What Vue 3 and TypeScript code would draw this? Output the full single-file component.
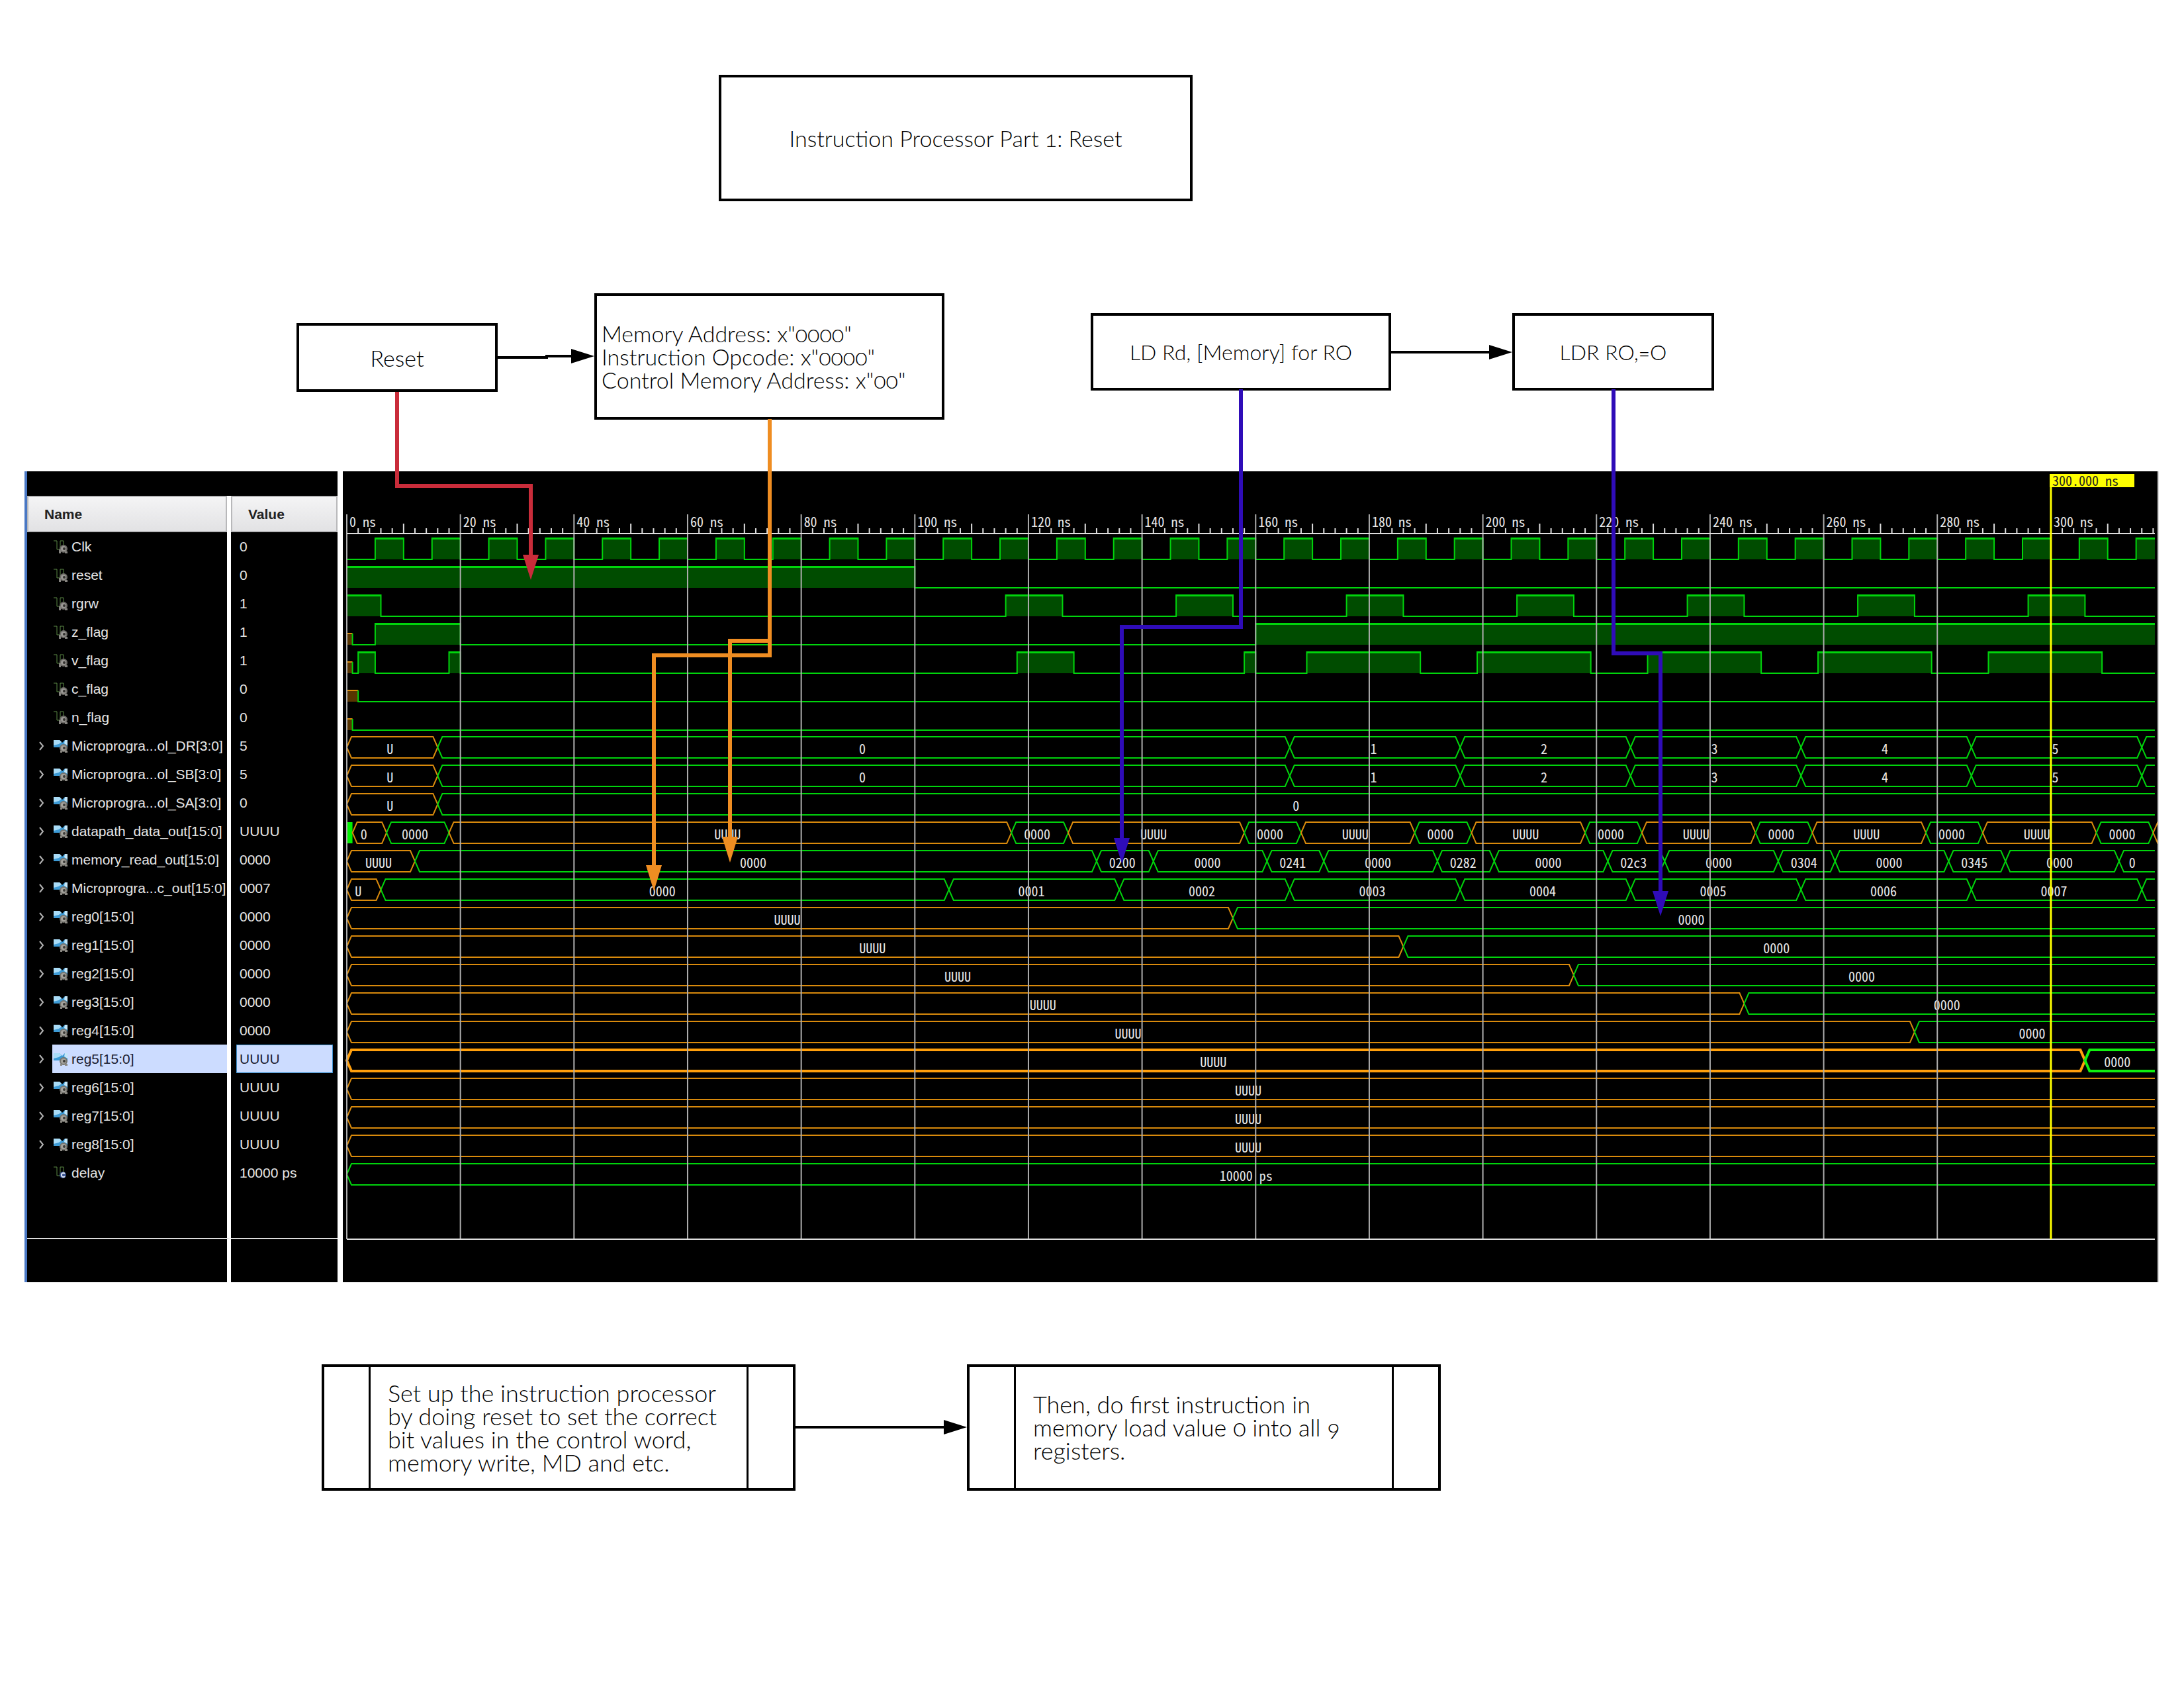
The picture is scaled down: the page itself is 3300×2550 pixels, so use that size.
<script setup lang="ts">
type Level = 'high' | 'low' | 'undef'
interface Pulse { from: number; to: number }
interface Segment { to: number; text: string; undef?: boolean; at?: number }
interface Signal {
  name: string
  value: string
  kind: 'bit' | 'bus' | 'const'
  undefUntil?: number
  pulses?: Pulse[]
  segments?: Segment[]
  dense?: boolean
  selected?: boolean
}

const END = 318.3
const WAVE_W = 2742
const WAVE_H = 1225
const ROW_TOP = 92
const ROW_H = 43
const NS_PX = 8.583

const px = (ns: number): number => 6 + ns * NS_PX
const pct = (x: number, total: number): string => `${(x / total) * 100}%`

const u = (to: number, text = 'UUUU', at?: number): Segment => ({ to, text, undef: true, at })
const v = (to: number, text: string, at?: number): Segment => ({ to, text, at })
const every = (from: number, len: number, step: number): Pulse[] => {
  const out: Pulse[] = []
  for (let t = from; t < END; t += step) out.push({ from: t, to: Math.min(t + len, END) })
  return out
}

const control = (): Segment[] => [
  u(16, 'U', 7.6), v(166, '0'), v(196, '1'), v(226, '2'), v(256, '3'), v(286, '4'), v(316, '5'), v(END, ''),
]
const register = (n: number, loaded: number | null): Signal => ({
  name: `reg${n}[15:0]`,
  value: n < 5 ? '0000' : 'UUUU',
  kind: 'bus',
  selected: n === 5,
  segments: loaded === null ? [u(END)] : [u(loaded), v(END, '0000')],
})

const datapath: Segment[] = [u(7, '0', 3), v(18, '0000', 12), u(117), v(127, '0000'), u(158), v(168, '0000')]
for (let t = 168; t < 308; t += 30) datapath.push(u(t + 20), v(t + 30, '0000'))
datapath.push(u(END, ''))

const signals: Signal[] = [
  { name: 'Clk', value: '0', kind: 'bit', pulses: every(5, 5, 10) },
  { name: 'reset', value: '0', kind: 'bit', pulses: [{ from: 0, to: 100 }] },
  { name: 'rgrw', value: '1', kind: 'bit', pulses: [{ from: 0, to: 6 }, ...every(116, 10, 30)] },
  { name: 'z_flag', value: '1', kind: 'bit', undefUntil: 1, pulses: [{ from: 5, to: 20 }, { from: 160, to: END }] },
  {
    name: 'v_flag', value: '1', kind: 'bit', undefUntil: 1,
    pulses: [{ from: 2, to: 5 }, { from: 18, to: 20 }, { from: 118, to: 128 }, { from: 158, to: 160 }, ...every(169, 20, 30)],
  },
  { name: 'c_flag', value: '0', kind: 'bit', undefUntil: 2, pulses: [] },
  { name: 'n_flag', value: '0', kind: 'bit', undefUntil: 1, pulses: [] },
  { name: 'Microprogra...ol_DR[3:0]', value: '5', kind: 'bus', segments: control() },
  { name: 'Microprogra...ol_SB[3:0]', value: '5', kind: 'bus', segments: control() },
  { name: 'Microprogra...ol_SA[3:0]', value: '0', kind: 'bus', segments: [u(16, 'U', 7.6), v(END, '0', 167.1)] },
  { name: 'datapath_data_out[15:0]', value: 'UUUU', kind: 'bus', dense: true, segments: datapath },
  {
    name: 'memory_read_out[15:0]', value: '0000', kind: 'bus',
    segments: [
      u(12, 'UUUU', 5.6), v(132, '0000'), v(142, '0200'), v(162, '0000'), v(172, '0241'), v(192, '0000'),
      v(202, '0282'), v(222, '0000'), v(232, '02c3'), v(252, '0000'), v(262, '0304'), v(282, '0000'),
      v(292, '0345'), v(312, '0000'), v(END, '0', 314.3),
    ],
  },
  {
    name: 'Microprogra...c_out[15:0]', value: '0007', kind: 'bus',
    segments: [
      u(6, 'U', 2), v(106, '0000'), v(136, '0001'), v(166, '0002'), v(196, '0003'), v(226, '0004'),
      v(256, '0005'), v(286, '0006'), v(316, '0007'), v(END, ''),
    ],
  },
  register(0, 156), register(1, 186), register(2, 216), register(3, 246), register(4, 276), register(5, 306),
  register(6, null), register(7, null), register(8, null),
  { name: 'delay', value: '10000 ps', kind: 'const', segments: [v(END, '10000 ps', 158.3)] },
]

interface Shape { d: string; cls: string }
interface Label { text: string; left: string; top: string }
const fills: Shape[] = []
const lines: Shape[] = []
const labels: Label[] = []

function drawBit(s: Signal, top: number): void {
  const y: Record<Level, number> = { high: top + 9, low: top + 41, undef: top + 24 }
  const start = s.undefUntil ?? 0
  if (start > 0) {
    fills.push({ d: `M${px(0)} ${y.undef}H${px(start)}V${y.low}H${px(0)}Z`, cls: 'fill-u' })
    lines.push({ d: `M${px(0)} ${y.undef}H${px(start)}`, cls: 'line-u' })
  }
  let d = start > 0 ? `M${px(start)} ${y.undef}V${y.low}` : `M${px(0)} ${y.low}`
  for (const p of s.pulses ?? []) {
    fills.push({ d: `M${px(p.from)} ${y.high}H${px(p.to)}V${y.low}H${px(p.from)}Z`, cls: 'fill-v' })
    lines.push({ d: `M${px(p.from)} ${y.high + 1}H${px(p.to)}`, cls: 'line-v' })
    d += p.from === 0 ? `M${px(0)} ${y.high}` : `H${px(p.from)}V${y.high}`
    d += p.to === END ? `H${px(END)}` : `H${px(p.to)}V${y.low}`
  }
  const last = s.pulses?.[s.pulses.length - 1]
  if (!last || last.to !== END) d += `H${px(END)}`
  lines.push({ d, cls: 'line-v' })
}

function drawBus(s: Signal, top: number): void {
  const hi = top + 8
  const lo = top + 40
  const mid = top + 24
  let from = s.dense ? 1 : 0
  if (s.dense) fills.push({ d: `M${px(0)} ${hi}H${px(1)}V${lo}H${px(0)}Z`, cls: 'fill-dense' })
  for (const seg of s.segments ?? []) {
    const a = px(from)
    const b = px(seg.to)
    const cls = (seg.undef ? 'line-u' : 'line-v') + (s.selected ? ' thick' : '')
    if (seg.to === END) {
      const r = Math.max(b, a + 9)
      lines.push({ d: `M${r} ${hi}H${a + 7}L${a} ${mid}L${a + 7} ${lo}H${r}`, cls })
    } else {
      lines.push({ d: `M${a} ${mid}L${a + 7} ${hi}H${b - 7}L${b} ${mid}L${b - 7} ${lo}H${a + 7}Z`, cls })
    }
    if (seg.text) {
      const shift = seg.text.length > 1 ? 4 : 2
      labels.push({
        text: seg.text,
        left: pct(seg.at === undefined ? (a + b) / 2 - shift : px(seg.at), WAVE_W),
        top: `${top + 14}px`,
      })
    }
    from = seg.to
  }
}

signals.forEach((s, i) => {
  const top = ROW_TOP + i * ROW_H
  if (s.kind === 'bit') drawBit(s, top)
  else drawBus(s, top)
})

const majors = Array.from({ length: 16 }, (_, i) => i * 20)
let ticks = ''
for (let t = 2; t < END; t += 2) if (t % 20) ticks += `M${px(t)} 86V93`
for (let t = 10; t < END; t += 20) ticks += `M${px(t)} 79V93`
const grid = majors.filter((t) => t < 300).map((t) => `M${px(t)} 65V1160`).join('')

const BOARD_W = 3300
interface Node { id: string; text: string; x: number; y: number; w: number; h: number; kind: string }
const nodes: Node[] = [
  { id: 'title', text: 'Instruction Processor Part 1: Reset', x: 1086, y: 113, w: 716, h: 191, kind: 'center' },
  { id: 'reset', text: 'Reset', x: 448, y: 488, w: 304, h: 104, kind: 'center' },
  { id: 'memory', text: 'Memory Address: x"0000"\nInstruction Opcode: x"0000"\nControl Memory Address: x"00"', x: 898, y: 443, w: 529, h: 191, kind: 'left' },
  { id: 'ld', text: 'LD Rd, [Memory] for RO', x: 1648, y: 473, w: 454, h: 117, kind: 'center compact' },
  { id: 'ldr', text: 'LDR RO,=O', x: 2285, y: 473, w: 305, h: 117, kind: 'center compact' },
  { id: 'setup', text: 'Set up the instruction processor\nby doing reset to set the correct\nbit values in the control word,\nmemory write, MD and etc.', x: 486, y: 2061, w: 716, h: 191, kind: 'process' },
  { id: 'load', text: 'Then, do first instruction in\nmemory load value 0 into all 9\nregisters.', x: 1461, y: 2061, w: 716, h: 191, kind: 'process' },
]
const place = (n: Node) => ({
  left: pct(n.x, BOARD_W), top: `${n.y}px`, width: pct(n.w, BOARD_W), height: `${n.h}px`,
})

const links = [
  { color: '#000', width: 4, d: 'M752 540H826V538H866', head: 'M863 527L898 538L863 549Z' },
  { color: '#000', width: 4, d: 'M2102 532H2252', head: 'M2250 521L2285 532L2250 543Z' },
  { color: '#000', width: 4, d: 'M1202 2156H1428', head: 'M1426 2145L1461 2156L1426 2167Z' },
  { color: '#c92c3a', width: 6, d: 'M600 592V734H802V840', head: 'M790 838H814L802 876Z' },
  { color: '#ef8d22', width: 6, d: 'M1163 633V968H1103V1266', head: 'M1091 1264H1115L1103 1303Z' },
  { color: '#ef8d22', width: 6, d: 'M1163 633V990H988V1309', head: 'M976 1307H1000L988 1346Z' },
  { color: '#2f0cb8', width: 6, d: 'M1875 588V947H1695V1268', head: 'M1683 1266H1707L1695 1304Z' },
  { color: '#2f0cb8', width: 6, d: 'M2438 588V987H2509V1348', head: 'M2497 1346H2521L2509 1384Z' },
]
</script>

<template>
  <main class="board">
    <section class="viewer">
      <table class="signals">
        <colgroup><col class="col-name" /><col class="col-value" /></colgroup>
        <thead>
          <tr class="spacer"><td colspan="2"></td></tr>
          <tr>
            <th scope="col" class="head-name"><div>Name</div></th>
            <th scope="col" class="head-value"><div>Value</div></th>
          </tr>
        </thead>
        <tbody>
          <tr v-for="s in signals" :key="s.name" :class="{ selected: s.selected }">
            <td class="name">
              <div class="name-line">
                <span class="toggle">
                  <button v-if="s.kind === 'bus'" type="button" :aria-label="`Expand ${s.name}`">
                    <svg width="8" height="14" viewBox="0 0 8 14"><path d="M1 1L6 7L1 13" fill="none" stroke="#b4b4b4" stroke-width="2" /></svg>
                  </button>
                </span>
                <span class="tag">
                  <svg v-if="s.kind === 'bus'" class="icon" viewBox="0 0 21 21">
                    <path d="M0 2H9L13 6L17 2H21V14H17L13 11L9 13H0Z" fill="#3d9bd6" />
                    <path d="M0 2H9L12 5L8 8L0 10Z" fill="#a9dcf7" />
                    <path d="M17 2H21V10L16 7Z" fill="#c4e6f8" />
                    <circle cx="15" cy="14" r="6" fill="#77756f" />
                    <circle cx="15" cy="14" r="4" fill="#a5a39d" />
                    <circle cx="16" cy="14" r="2" fill="#3c3b38" />
                    <path d="M10 18H13V21H10ZM17 18H21V21H17Z" fill="#8b8983" />
                  </svg>
                  <svg v-else class="icon" viewBox="0 0 21 21">
                    <path d="M0 2H5V15H10V2H15V9" fill="none" stroke="#5d8a46" stroke-width="1" />
                    <template v-if="s.kind === 'bit'">
                      <circle cx="15" cy="14" r="6" fill="#6b6965" />
                      <circle cx="15" cy="14" r="4" fill="#9a9894" />
                      <circle cx="16" cy="14" r="2" fill="#33322f" />
                      <path d="M8 15H11V21H8ZM17 18H21V21H17Z" fill="#84827e" />
                    </template>
                    <template v-else>
                      <circle cx="14" cy="14" r="5" fill="#34508f" />
                      <path d="M17 12A3 3 0 1 0 17 16" fill="none" stroke="#dfe6f5" stroke-width="2" />
                    </template>
                  </svg>
                  {{ s.name }}
                </span>
              </div>
            </td>
            <td class="value"><div class="value-box">{{ s.value }}</div></td>
          </tr>
          <tr class="rest"><td class="name"></td><td></td></tr>
          <tr class="foot"><td class="name"></td><td></td></tr>
        </tbody>
      </table>

      <div class="wave">
        <svg class="layer" :viewBox="`0 0 ${WAVE_W} ${WAVE_H}`" preserveAspectRatio="none">
          <path v-for="(f, i) in fills" :key="'f' + i" :d="f.d" :class="f.cls" />
          <path v-for="(l, i) in lines" :key="'l' + i" :d="l.d" class="line" :class="l.cls" />
        </svg>
        <span v-for="(l, i) in labels" :key="i" class="label" :style="{ left: l.left, top: l.top }">{{ l.text }}</span>
        <span v-for="t in majors" :key="t" class="tick" :style="{ left: pct(px(t) + 4, WAVE_W) }">{{ t }} ns</span>
        <svg class="layer" :viewBox="`0 0 ${WAVE_W} ${WAVE_H}`" preserveAspectRatio="none">
          <path :d="grid" class="line grid" />
          <path :d="ticks" class="line ruler" />
          <path :d="`M${px(0)} 94H${px(END)}M${px(0)} 1160H${px(END)}`" class="line ruler" />
          <path :d="`M${px(300)} 4V1160`" class="line cursor" />
        </svg>
        <span class="cursor-label" :style="{ left: pct(px(300) - 2, WAVE_W) }">300.000 ns</span>
      </div>
    </section>

    <div v-for="n in nodes" :key="n.id" class="node" :class="n.kind" :style="place(n)">
      <component :is="n.id === 'title' ? 'h1' : 'p'" class="node-text">{{ n.text }}</component>
    </div>

    <svg class="links" viewBox="0 0 3300 2550" preserveAspectRatio="none">
      <g v-for="(l, i) in links" :key="i">
        <path :d="l.d" fill="none" :stroke="l.color" :stroke-width="l.width" />
        <path :d="l.head" :fill="l.color" />
      </g>
    </svg>
  </main>
</template>

<style>
body {
  margin: 0;
  background: #fff;
}
</style>

<style scoped>
.board {
  position: relative;
  box-sizing: border-box;
  min-height: 2550px;
  padding: 712px 38px 0 37px;
  background: #fff;
  font-family: Lato, "Liberation Sans", sans-serif;
}
.viewer {
  display: flex;
  border-left: 4px solid #4a78c4;
  border-right: 2px solid #d8d8d8;
  font-family: "Liberation Sans", Arial, sans-serif;
  font-size: 21px;
}
.signals {
  flex: none;
  width: 469px;
  table-layout: fixed;
  border-collapse: separate;
  border-spacing: 0;
  background: #000;
  color: #e6e6e6;
}
.col-name { width: 308px; }
.col-value { width: 161px; }
.signals td, .signals th { padding: 0; text-align: left; }
.spacer td { height: 37px; }
.head-name, .name { border-right: 6px solid #fff; }
.signals th div {
  box-sizing: border-box;
  height: 55px;
  padding-left: 24px;
  border: 2px solid #b8b8ba;
  background: linear-gradient(#f4f4f5, #e2e2e4);
  color: #222;
  line-height: 51px;
}
.name-line { display: flex; height: 43px; }
.toggle { display: flex; flex: none; width: 38px; align-items: center; }
.toggle button {
  display: flex;
  margin: 0 0 0 18px;
  padding: 0;
  border: 0;
  background: none;
}
.tag {
  display: flex;
  flex: 1;
  align-items: center;
  gap: 6px;
  padding-left: 2px;
  white-space: nowrap;
}
.icon { flex: none; width: 21px; height: 21px; }
.value-box {
  box-sizing: border-box;
  height: 43px;
  margin: 0 7px 0 8px;
  padding-left: 4px;
  border: 1px solid transparent;
  line-height: 41px;
}
.selected .tag { background: #ccdcff; color: #1c2030; }
.selected .value-box { border-color: #3f93d2; background: #ccdcff; color: #1c2030; }
.rest td { height: 77px; border-bottom: 2px solid #dcdcdc; }
.foot td { height: 65px; }

.wave {
  position: relative;
  flex: 1;
  margin-left: 8px;
  background: #000;
  overflow: hidden;
  color: #e8e8e8;
  font-family: "Noto Sans CJK JP", monospace;
  font-feature-settings: "hwid";
  font-size: 20px;
  line-height: 24px;
  white-space: pre;
}
.layer { position: absolute; top: 0; left: 0; width: 100%; height: 1225px; }
.line { fill: none; stroke-width: 2px; vector-effect: non-scaling-stroke; }
.line-v { stroke: #00d40c; }
.line-u { stroke: #d98a0c; }
.thick { stroke-width: 4px; }
.line-v.thick { stroke: #10f010; }
.line-u.thick { stroke: #ff9f0c; }
.fill-v { fill: #004c00; }
.fill-u { fill: #583400; }
.fill-dense { fill: #00f000; }
.grid { stroke: #adadad; }
.ruler { stroke: #dedede; }
.cursor { stroke: #ffff00; stroke-width: 3px; }
.label { position: absolute; transform: translateX(-50%); }
.tick { position: absolute; top: 64px; }
.cursor-label {
  position: absolute;
  top: 4px;
  box-sizing: border-box;
  width: 128px;
  height: 20px;
  padding-left: 4px;
  background: #ffff00;
  color: #222;
  line-height: 20px;
}

.node {
  position: absolute;
  display: flex;
  box-sizing: border-box;
  align-items: center;
  border: 4px solid #000;
  background: #fff;
}
.node-text {
  margin: 0;
  color: #000;
  font-size: 34px;
  font-weight: 300;
  font-feature-settings: "onum";
  line-height: 35px;
  white-space: pre;
}
.center { justify-content: center; }
.compact .node-text { font-size: 32px; }
.left { padding-left: 7px; }
.process::before, .process::after {
  content: "";
  box-sizing: border-box;
  flex: none;
  width: 70px;
  height: 100%;
}
.process::before { border-right: 3px solid #000; }
.process::after { border-left: 3px solid #000; }
.process .node-text { flex: 1; padding-left: 26px; font-size: 36px; }
.links { position: absolute; top: 0; left: 0; width: 100%; height: 2550px; pointer-events: none; }
</style>
